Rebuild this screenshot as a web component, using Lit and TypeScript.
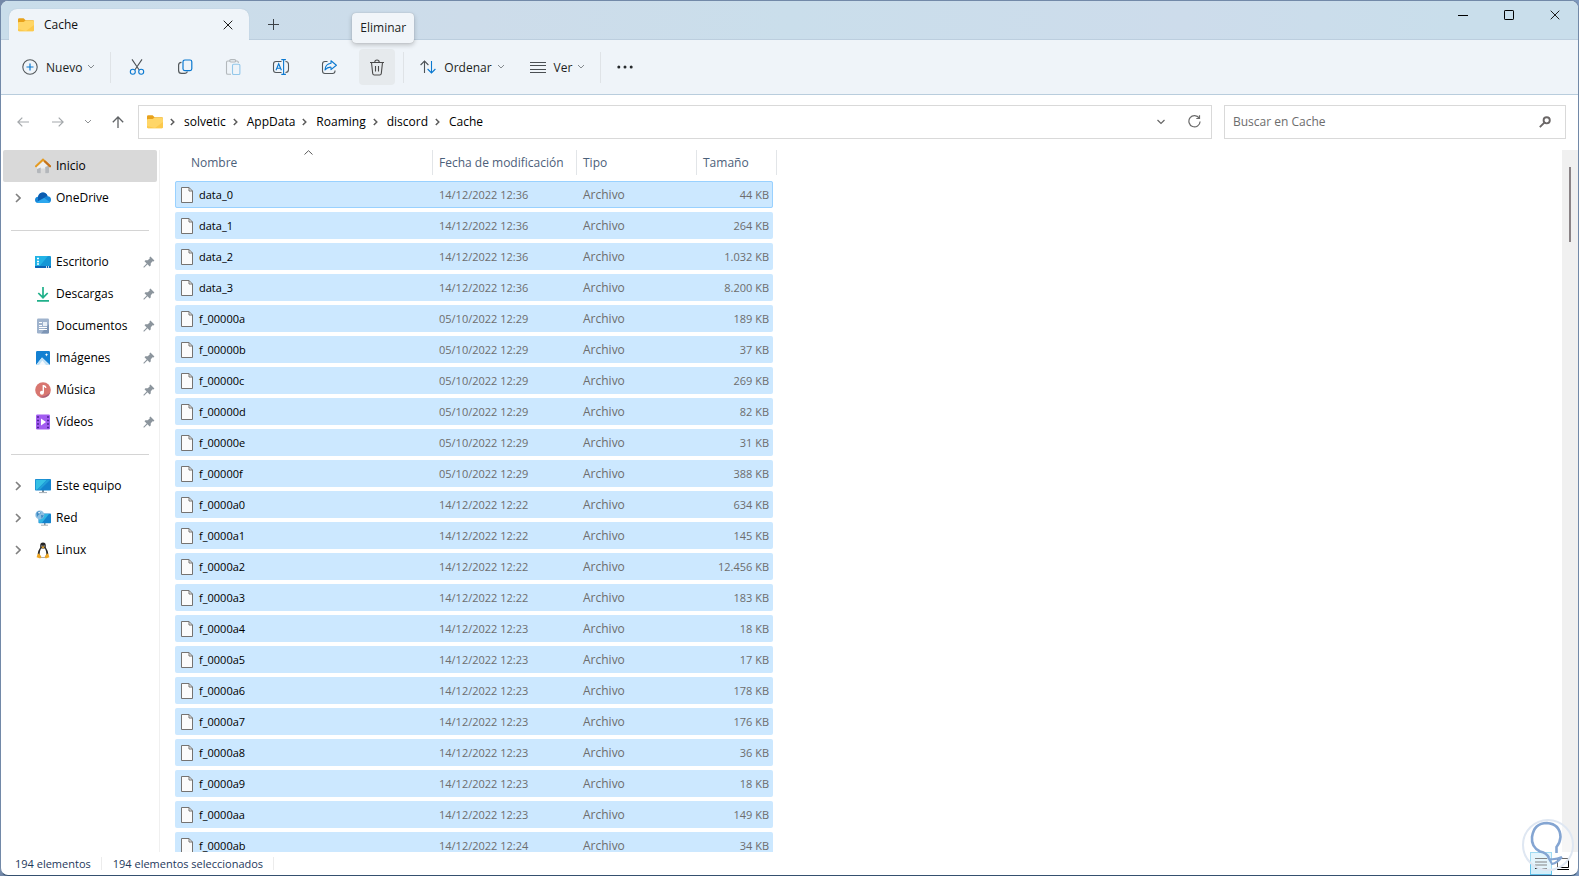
import { LitElement, html, css, svg, nothing } from "lit";
import { customElement } from "lit/decorators.js";

const folder = svg`<svg width="16" height="14" viewBox="0 0 16 14"><path d="M0 1.5Q0 .3 1.2 .3H5.6L7.6 2.3H14.8Q16 2.3 16 3.5V6H0Z" fill="#e8a21c"/><path d="M0 5Q0 4 1 4H5.6L7.6 2.6H14.8Q16 2.6 16 3.8V12Q16 13.2 14.8 13.2H1.2Q0 13.2 0 12Z" fill="#ffd667"/><path d="M0 11V12Q0 13.2 1.2 13.2H14.8Q16 13.2 16 12V7L8 13Z" fill="#fcc94c"/></svg>`;
const chevronDown = svg`<svg width="8" height="6" viewBox="0 0 8 6" fill="none" stroke="currentColor"><path d="M1 1L4 4L7 1"/></svg>`;
const chevronRight = svg`<svg width="6" height="10" viewBox="0 0 6 10" fill="none" stroke="currentColor" stroke-width="1.6"><path d="M1 1L5 5L1 9"/></svg>`;
const crumbChevron = svg`<svg width="5" height="8" viewBox="0 0 5 8" fill="none" stroke="#5c5c5c" stroke-width="1.5"><path d="M.8 1L3.8 4L.8 7"/></svg>`;
const closeX = svg`<svg width="10" height="10" viewBox="0 0 10 10" fill="none" stroke="#1c1c1c"><path d="M.7 .7L9.3 9.3M9.3 .7L.7 9.3"/></svg>`;
const plus = svg`<svg width="11" height="11" viewBox="0 0 11 11" fill="none" stroke="#3c4146"><path d="M5.5 0V11M0 5.5H11"/></svg>`;
const file = svg`<svg width="12" height="16" viewBox="0 0 12 16"><path d="M.5 .5H8L11.5 4V15.5H.5Z" fill="#fbfbfb" stroke="#757371"/><path d="M8 .5V4H11.5" fill="none" stroke="#757371"/></svg>`;
const pin = svg`<svg width="12" height="12" viewBox="0 0 12 12"><path d="M7.400 .6L11.400 4.600L10.500 5.500L9.600 5.300L7.800 7.300L7.700 9.600L6.700 10.500L4.500 8.300L1 11.700L.3 11L3.700 7.500L1.500 5.300L2.400 4.300L4.700 4.200L6.700 2.400L6.500 1.500Z" fill="#8c959d"/></svg>`;

const icons: Record<string, unknown> = {
  create: svg`<svg width="16" height="16" viewBox="0 0 16 16" fill="none"><circle cx="8" cy="8" r="7.2" stroke="#53585c" stroke-width="1.1"/><path d="M8 4.5V11.5M4.5 8H11.5" stroke="#0a78d0" stroke-width="1.2"/></svg>`,
  cut: svg`<svg width="16" height="16" viewBox="0 0 16 16" fill="none" stroke-width="1.1"><path d="M3 .4L10.200 11M13 .4L5.800 11" stroke="#4e5357"/><circle cx="3.800" cy="12.800" r="2.500" stroke="#0a78d0"/><circle cx="12.200" cy="12.800" r="2.500" stroke="#0a78d0"/></svg>`,
  copy: svg`<svg width="16" height="16" viewBox="0 0 16 16" fill="none" stroke-width="1.2"><path d="M4.500 3.300Q1.600 3.500 1.600 6V11.500Q1.600 14.400 4.500 14.400H7.500Q10 14.400 10.300 12.500" stroke="#53585c"/><rect x="6" y="1" width="8.800" height="10.600" rx="1.800" stroke="#0a78d0"/></svg>`,
  paste: svg`<svg width="16" height="16" viewBox="0 0 16 16" fill="none" stroke-width="1.1"><path d="M5 2H2.800Q1.500 2 1.500 3.300V14Q1.500 15.300 2.800 15.300H6M11 2H12Q13.300 2 13.300 3.300V4" stroke="#b3b8bc"/><rect x="4.700" y=".6" width="6" height="2.400" rx="1.200" stroke="#b3b8bc"/><rect x="7.500" y="5.300" width="7.400" height="10.200" rx="1.200" stroke="#93c7ea"/></svg>`,
  rename: svg`<svg width="18" height="16" viewBox="0 0 18 16" fill="none" stroke-width="1.100"><path d="M9.500 2.500H4Q1.500 2.500 1.500 5V11Q1.500 13.500 4 13.500H9.500M13.500 2.500Q16.500 2.500 16.500 5.500V10.500Q16.500 13.500 13.500 13.500" stroke="#53585c"/><path d="M4 11.300L6.700 4.800L9.400 11.300M5 9.300H8.400M11.600 .6V15.400M9.300 .6H13.900M9.300 15.400H13.900" stroke="#0a78d0"/></svg>`,
  share: svg`<svg width="16" height="16" viewBox="0 0 16 16" fill="none" stroke-width="1.100" stroke-linejoin="round"><path d="M6.500 2.500H4Q1.500 2.500 1.500 5V12Q1.500 14.500 4 14.500H11.500Q14 14.500 14 12V11.500" stroke="#53585c"/><path d="M10 1.800L15.400 6.200L10 10.600V8.200Q6.500 7.900 4 11Q4.300 5 10 4.300Z" stroke="#0a78d0"/></svg>`,
  trash: svg`<svg width="16" height="17" viewBox="0 0 16 17" fill="none" stroke="#4a4a4a" stroke-width="1.100"><path d="M1 3.500H15M5.800 3.300Q5.800 1 8 1Q10.200 1 10.200 3.300M2.500 3.500L3.700 14.500Q3.900 16 5.300 16H10.700Q12.100 16 12.300 14.500L13.500 3.500M6.500 7V12.500M9.500 7V12.500"/></svg>`,
  sort: svg`<svg width="16" height="14" viewBox="0 0 16 14" fill="none" stroke-width="1.100"><path d="M4.500 13V1.200M.6 5L4.500 1.100L8.400 5" stroke="#4e5357"/><path d="M11.500 1V12.800M7.600 9L11.500 12.900L15.400 9" stroke="#0a78d0"/></svg>`,
  view: svg`<svg width="16" height="11" viewBox="0 0 16 11" stroke="#4a4f53"><path d="M0 .5H16M0 3.500H16M0 7.500H16M0 10.500H16"/></svg>`,
  more: svg`<svg width="16" height="4" viewBox="0 0 16 4" fill="#26292c"><circle cx="1.800" cy="2" r="1.500"/><circle cx="8" cy="2" r="1.500"/><circle cx="14.200" cy="2" r="1.500"/></svg>`,
  home: svg`<svg width="16" height="16" viewBox="0 0 16 16"><path d="M2 8L8 2.500L14 8V14.300Q14 15.300 13 15.300H10.200V10.500H5.800V15.300H3Q2 15.300 2 14.300Z" fill="#eceef0"/><path d="M10.200 9L14 7.500V14.300Q14 15.300 13 15.300H10.200ZM2 11L5.800 9.500V15.300H3Q2 15.300 2 14.300Z" fill="#b4b7bb"/><path d="M1 8.200L8 1.700L15 8.200" fill="none" stroke="#e59b22" stroke-width="2" stroke-linecap="round"/><path d="M10 3.500L15 8.200" fill="none" stroke="#c4711d" stroke-width="2" stroke-linecap="round"/></svg>`,
  cloud: svg`<svg width="16" height="12" viewBox="0 0 16 12"><path d="M3.500 11Q0 11 0 8Q0 5.200 3 4.800Q4.300 .6 8 .6Q11.400 .6 12.600 4.200Q16 4.600 16 7.700Q16 11 12.500 11Z" fill="#1586d8"/><path d="M3 4.800Q4.300 .6 8 .6Q11.400 .6 12.600 4.200Q10.500 4 9.300 5.700L3 9Z" fill="#0b5cb0"/><path d="M1.500 10.200L9.300 6L15 10.200Q14 11 12.500 11H3.500Q2.300 11 1.500 10.200Z" fill="#2da7ee"/></svg>`,
  desktop: svg`<svg width="16" height="12" viewBox="0 0 16 12"><rect width="16" height="12" rx="1" fill="#1496d6"/><path d="M0 0H13L3 12H0Z" fill="#22b3e6"/><path d="M0 10H16V11Q16 12 15 12H1Q0 12 0 11Z" fill="#0b63b5"/><path d="M2 2.500H4M2 5.500H4M2 8H4M11 11H12M13 11H14" stroke="#fff" stroke-width="1.300"/></svg>`,
  download: svg`<svg width="16" height="16" viewBox="0 0 16 16" fill="none" stroke="#20b08a" stroke-width="1.700"><path d="M8 1V11.500M3.300 7L8 11.700L12.700 7M2 14.900H14"/></svg>`,
  document: svg`<svg width="16" height="16" viewBox="0 0 16 16"><rect x="2" y=".5" width="12" height="15" rx="1.200" fill="#9fb3cd"/><path d="M14 6V14.300Q14 15.500 12.800 15.500H6Z" fill="#7d95b5"/><path d="M4 4.500H7M4 7.500H7M4 9.500H12M4 11.500H12" stroke="#fff"/><rect x="8" y="4" width="4" height="4" fill="#e8eff7"/></svg>`,
  picture: svg`<svg width="16" height="16" viewBox="0 0 16 16"><rect x="1" y="1" width="14" height="14" rx="1.200" fill="#1380d2"/><path d="M1.500 14.500L7 7.500L14.500 14.600Q14 15 13.500 15H2.300Z" fill="#f4fafe"/><path d="M7 7.500L1 15H4L7.400 10.500L11 15H14.500Z" fill="#c2e2f7"/><path d="M11.500 3L12 4.300L13.300 4.800L12 5.300L11.500 6.600L11 5.300L9.700 4.800L11 4.300Z" fill="#fff"/></svg>`,
  music: svg`<svg width="16" height="16" viewBox="0 0 16 16"><circle cx="8" cy="8" r="7.800" fill="#d87670"/><path d="M15.200 10.500Q13.500 15.500 8 15.800Q6 15.800 4.500 15Q11 14.500 15.200 10.500Z" fill="#a9607a"/><path d="M8.300 3V10.500M8.300 3.700Q10.500 3.800 10.800 6" stroke="#fff" stroke-width="1.400" fill="none"/><circle cx="6.900" cy="10.800" r="2" fill="#fff"/></svg>`,
  video: svg`<svg width="16" height="16" viewBox="0 0 16 16"><rect x="1" y=".5" width="14" height="15" rx="1.200" fill="#a25cf0"/><path d="M2 3H4M2 6.500H4M2 10H4M2 13.500H4M12 3H14M12 6.500H14M12 10H14M12 13.500H14" stroke="#4c2294" stroke-width="1.700"/><path d="M6 4.500L11 8L6 11.500Z" fill="#fff"/></svg>`,
  computer: svg`<svg width="16" height="16" viewBox="0 0 16 16"><path d="M7 12H9V14.300H7Z" fill="#7f8b94"/><path d="M4 14.600H12" stroke="#a2adb5"/><rect y="1" width="16" height="11.500" rx=".8" fill="#1483ce"/><path d="M.7 1.700H12L2 11.800H.7Z" fill="#35c0e4"/><path d="M12 1.700H15.300L5 11.800H2Z" fill="#22a0d9"/></svg>`,
  network: svg`<svg width="16" height="16" viewBox="0 0 16 16"><path d="M9 13H10.500V15H9Z" fill="#7f8b94"/><path d="M6 15.200H13" stroke="#a2adb5"/><rect x="3.500" y="3.500" width="12.500" height="9.800" rx=".8" fill="#1483ce"/><path d="M4 8V12.800H7L14 4H8Z" fill="#31b5e2"/><circle cx="4.800" cy="4.900" r="4.500" fill="#8cbfe2"/><path d="M1.500 3Q3 .8 5 1L6 3L3.500 5L2 7ZM6 5L9 5.500L6.500 8.800Z" fill="#3e8ac4"/><path d="M3 2L6 1.500L4 4Z" fill="#e3f1fa"/></svg>`,
  linux: svg`<svg width="16" height="17" viewBox="0 0 16 17"><path d="M5.200 3.500Q5.200 .5 8 .5Q10.800 .5 10.800 3.500V5.500Q13.200 9 13.300 12L11.500 15.500H4.500L2.700 12Q2.800 9 5.200 5.500Z" fill="#262626"/><path d="M6 6.500H10Q11.500 9.500 11.400 12L10.200 15.300H5.800L4.600 12Q4.500 9.500 6 6.500Z" fill="#fff"/><path d="M6.400 3.400H7.400V4.400H6.400ZM8.600 3.400H9.600V4.400H8.600Z" fill="#fff"/><path d="M6.300 5L8 4.300L9.700 5L8 6.500ZM2.600 12L4 11.400L6.500 15L5.200 16.500L1.600 15.200ZM13.400 12L12 11.400L9.600 15L10.800 16.500L14.400 15.200Z" fill="#efa724"/></svg>`,
};

interface Place { label: string; icon: string; expand?: boolean; pinned?: boolean; current?: boolean }

const places: Place[][] = [
  [
    { label: "Inicio", icon: "home", current: true },
    { label: "OneDrive", icon: "cloud", expand: true },
  ],
  [
    { label: "Escritorio", icon: "desktop", pinned: true },
    { label: "Descargas", icon: "download", pinned: true },
    { label: "Documentos", icon: "document", pinned: true },
    { label: "Imágenes", icon: "picture", pinned: true },
    { label: "Música", icon: "music", pinned: true },
    { label: "Vídeos", icon: "video", pinned: true },
  ],
  [
    { label: "Este equipo", icon: "computer", expand: true },
    { label: "Red", icon: "network", expand: true },
    { label: "Linux", icon: "linux", expand: true },
  ],
];

const files: [string, string, string][] = [
  ["data_0", "14/12/2022 12:36", "44 KB"],
  ["data_1", "14/12/2022 12:36", "264 KB"],
  ["data_2", "14/12/2022 12:36", "1.032 KB"],
  ["data_3", "14/12/2022 12:36", "8.200 KB"],
  ["f_00000a", "05/10/2022 12:29", "189 KB"],
  ["f_00000b", "05/10/2022 12:29", "37 KB"],
  ["f_00000c", "05/10/2022 12:29", "269 KB"],
  ["f_00000d", "05/10/2022 12:29", "82 KB"],
  ["f_00000e", "05/10/2022 12:29", "31 KB"],
  ["f_00000f", "05/10/2022 12:29", "388 KB"],
  ["f_0000a0", "14/12/2022 12:22", "634 KB"],
  ["f_0000a1", "14/12/2022 12:22", "145 KB"],
  ["f_0000a2", "14/12/2022 12:22", "12.456 KB"],
  ["f_0000a3", "14/12/2022 12:22", "183 KB"],
  ["f_0000a4", "14/12/2022 12:23", "18 KB"],
  ["f_0000a5", "14/12/2022 12:23", "17 KB"],
  ["f_0000a6", "14/12/2022 12:23", "178 KB"],
  ["f_0000a7", "14/12/2022 12:23", "176 KB"],
  ["f_0000a8", "14/12/2022 12:23", "36 KB"],
  ["f_0000a9", "14/12/2022 12:23", "18 KB"],
  ["f_0000aa", "14/12/2022 12:23", "149 KB"],
  ["f_0000ab", "14/12/2022 12:24", "34 KB"],
];

const reset = css`
  * { box-sizing: border-box; }
  svg { display: block; flex: none; }
  button { font: inherit; color: inherit; background: none; border: 0; padding: 0; margin: 0; display: flex; align-items: center; justify-content: center; }
  a { color: inherit; text-decoration: none; }
  ul, ol { list-style: none; margin: 0; padding: 0; }
`;

@customElement("title-bar")
class TitleBar extends LitElement {
  static styles = [reset, css`
    :host { display: flex; align-items: flex-end; height: 39px; padding-left: 8px; background: linear-gradient(90deg, #c9ddea, #cddcea 30%, #cadeeb 50%, #cddceb 75%, #c9deeb 92%); border-bottom: 1px solid #bccede; }
    .tab { width: 240px; height: 31px; margin-bottom: -1px; padding: 0 16px 0 9px; display: flex; align-items: center; background: #eff4f9; border-radius: 8px 8px 0 0; box-shadow: 0 0 1px #9fb6c8; clip-path: inset(-2px -2px 0 -2px); }
    .name { margin-left: 10px; flex: 1; }
    .add { width: 30px; height: 30px; margin-left: 9px; }
    .controls { margin-left: auto; align-self: flex-start; display: flex; }
    .controls button { width: 46px; height: 28px; }
  `];
  render() {
    return html`
      <div class="tab">${folder}<span class="name">Cache</span><button aria-label="Cerrar pestaña">${closeX}</button></div>
      <button class="add" aria-label="Nueva pestaña">${plus}</button>
      <div class="controls">
        <button aria-label="Minimizar"><svg width="10" height="10" viewBox="0 0 10 10"><path d="M0 5.500H10" stroke="#000"/></svg></button>
        <button aria-label="Maximizar"><svg width="10" height="10" viewBox="0 0 10 10"><rect x=".5" y=".5" width="9" height="9" rx=".6" fill="none" stroke="#000"/></svg></button>
        <button aria-label="Cerrar">${closeX}</button>
      </div>`;
  }
}

@customElement("command-bar")
class CommandBar extends LitElement {
  static styles = [reset, css`
    :host { display: flex; align-items: center; height: 55px; padding-left: 11px; background: #eff4f9; border-bottom: 1px solid #b9cddd; }
    button { height: 36px; border-radius: 4px; }
    .menu { padding: 0 15px 0 10px; color: #1c1f22; }
    .menu span { margin: 2px 5px 0 8px; }
    .menu span + svg { color: #858a8e; }
    .rule + .menu { margin-left: 6px; }
    .tools { display: flex; gap: 12px; padding: 0 8px; }
    .tool { width: 36px; position: relative; }
    .hot { background: #e6eaed; }
    .rule { width: 1px; height: 31px; background: #dfe3e7; }
    .tip { position: absolute; left: -7px; bottom: 42px; height: 30px; padding: 0 8px; line-height: 29px; background: #f1f5f9; border-radius: 4px; color: #1c1f22; box-shadow: 0 2px 5px #00000038, 0 0 1px #00000040; z-index: 2; }
  `];
  private tool(icon: string, label: string, hot = false) {
    return html`<button class="tool ${hot ? "hot" : ""}" aria-label=${label}>${icons[icon]}${hot ? html`<span class="tip" role="tooltip">${label}</span>` : nothing}</button>`;
  }
  render() {
    return html`
      <button class="menu">${icons.create}<span>Nuevo</span>${chevronDown}</button>
      <span class="rule"></span>
      <div class="tools">
        ${this.tool("cut", "Cortar")}${this.tool("copy", "Copiar")}${this.tool("paste", "Pegar")}
        ${this.tool("rename", "Cambiar nombre")}${this.tool("share", "Compartir")}${this.tool("trash", "Eliminar", true)}
      </div>
      <span class="rule"></span>
      <button class="menu">${icons.sort}<span>Ordenar</span>${chevronDown}</button>
      <button class="menu">${icons.view}<span>Ver</span>${chevronDown}</button>
      <span class="rule"></span>
      <button class="menu" aria-label="Ver más">${icons.more}</button>`;
  }
}

@customElement("address-row")
class AddressRow extends LitElement {
  static styles = [reset, css`
    :host { display: flex; align-items: center; height: 55px; padding: 0 12px 2px 4px; }
    .nav { display: flex; color: #a4a8ab; width: 133px; }
    .nav button { height: 34px; width: 35px; }
    .nav .recent { width: 25px; color: #8e9194; }
    .nav .up { color: #5f6265; }
    .box { height: 34px; border: 1px solid #d9d9d9; display: flex; align-items: center; background: #fff; }
    .path { flex: 1; padding: 0 8px; }
    .crumbs { display: flex; margin-left: 7px; flex: 1; color: #000; }
    .crumbs li { display: flex; align-items: center; }
    .crumbs a { padding: 0 7px 0 9px; }
    .path button { width: 33px; color: #666; }
    .path button:last-child { width: 18px; margin-left: 8px; }
    .search { margin-left: 12px; width: 342px; padding: 0 14px 0 8px; }
    input { flex: 1; min-width: 0; border: 0; outline: 0; padding: 0; font: inherit; background: none; }
    input::placeholder { color: #6d6d6d; opacity: 1; }
  `];
  render() {
    return html`
      <nav class="nav" aria-label="Historial">
        <button aria-label="Atrás"><svg width="12" height="10" viewBox="0 0 12 10" fill="none" stroke="currentColor" stroke-width="1.200"><path d="M12 5H1M5.300 .6L.9 5L5.300 9.400"/></svg></button>
        <button aria-label="Adelante"><svg width="12" height="10" viewBox="0 0 12 10" fill="none" stroke="currentColor" stroke-width="1.200"><path d="M0 5H11M6.700 .6L11.100 5L6.700 9.400"/></svg></button>
        <button class="recent" aria-label="Recientes">${chevronDown}</button>
        <button class="up" aria-label="Subir"><svg width="12" height="12" viewBox="0 0 12 12" fill="none" stroke="currentColor" stroke-width="1.300"><path d="M6 12V1M.8 6.200L6 1L11.200 6.200"/></svg></button>
      </nav>
      <div class="box path">
        ${folder}
        <ol class="crumbs">${["solvetic", "AppData", "Roaming", "discord", "Cache"].map((c) => html`<li>${crumbChevron}<a href="#">${c}</a></li>`)}</ol>
        <button aria-label="Ubicaciones anteriores"><svg width="8" height="6" viewBox="0 0 8 6" fill="none" stroke="currentColor" stroke-width="1.200"><path d="M.5 1L4 4.500L7.500 1"/></svg></button>
        <button aria-label="Actualizar"><svg width="13" height="13" viewBox="0 0 13 13" fill="none" stroke="#6a6a6a" stroke-width="1.200"><path d="M11.200 3.200A5.600 5.600 0 1 0 12.100 6.500M11.500 .3V3.500H8.300"/></svg></button>
      </div>
      <div class="box search">
        <input type="search" aria-label="Buscar en Cache" placeholder="Buscar en Cache" />
        <svg width="12" height="12" viewBox="0 0 12 12" fill="none" stroke="#6b6767" stroke-width="1.900"><circle cx="7.700" cy="4.300" r="3.100"/><path d="M5.300 6.700L.8 11.200"/></svg>
      </div>`;
  }
}

@customElement("side-nav")
class SideNav extends LitElement {
  static styles = [reset, css`
    :host { width: 159px; flex: none; border-right: 1px solid #f0f0f0; padding-left: 2px; }
    a { display: grid; grid-template-columns: 20px 16px 1fr 12px; column-gap: 5px; align-items: center; height: 32px; width: 154px; padding: 0 2px 0 7px; border-radius: 2px; color: #000; }
    .current { background: #d9d9d9; }
    .twist { padding-left: 5px; color: #808080; }
    hr { border: 0; height: 1px; background: #d4d4d4; margin: 16px 10px 15px 8px; }
  `];
  render() {
    return places.map((group, i) => html`
      ${i ? html`<hr />` : nothing}
      <ul>${group.map((p) => html`<li><a href="#" class=${p.current ? "current" : ""}>
        <span class="twist">${p.expand ? chevronRight : nothing}</span>${icons[p.icon]}<span>${p.label}</span>${p.pinned ? pin : nothing}
      </a></li>`)}</ul>`);
  }
}

@customElement("file-list")
class FileTable extends LitElement {
  static styles = [reset, css`
    :host { flex: 1; min-width: 0; overflow: hidden; padding-left: 15px; }
    table, thead, tbody { display: block; }
    tr { display: grid; grid-template-columns: 258px 144px 120px 76px 4px; }
    thead tr { height: 25px; margin-bottom: 6px; }
    th { padding: 0 0 0 6px; font-weight: 400; text-align: left; line-height: 25px; color: #4c607a; border-right: 1px solid #e2e5e8; position: relative; white-space: nowrap; }
    th:first-child { padding-left: 16px; }
    th:nth-child(4) { border-right: 0; }
    .edge { padding: 0; }
    .arrow { position: absolute; left: 129px; top: 0; }
    tbody tr { height: 27px; margin-bottom: 4px; }
    td { padding: 0 0 0 6px; line-height: 27px; color: #6d6d6d; background: #cce8ff; white-space: nowrap; }
    .num { font-size: 11px; }
    td:first-child { display: flex; align-items: center; gap: 6px; color: #000; border-radius: 2px 0 0 2px; }
    td:last-child { padding: 0 4px 0 0; text-align: right; border-radius: 0 2px 2px 0; }
    .focused { width: 598px; outline: 1px solid #99d1ff; outline-offset: -1px; border-radius: 2px; }
  `];
  render() {
    return html`<table>
      <thead><tr>
        <th aria-sort="ascending">Nombre<svg class="arrow" width="9" height="5" viewBox="0 0 9 5" fill="none" stroke="#5c5c5c"><path d="M.5 4.500L4.500 .7L8.500 4.500"/></svg></th>
        <th>Fecha de modificación</th><th>Tipo</th><th>Tamaño</th><th class="edge"></th>
      </tr></thead>
      <tbody>${files.map(([name, date, size], i) => html`<tr class=${i ? "" : "focused"}><td class="num">${file}${name}</td><td class="num">${date}</td><td>Archivo</td><td class="num">${size}</td></tr>`)}</tbody>
    </table>`;
  }
}

@customElement("status-bar")
class StatusBar extends LitElement {
  static styles = [reset, css`
    :host { display: flex; align-items: center; height: 23px; padding-left: 14px; color: #1e395b; position: relative; font-size: 11px; }
    .item { padding-right: 10px; margin-right: 11px; border-right: 1px solid #ececec; line-height: 13px; white-space: nowrap; }
    .views { margin-left: auto; display: flex; height: 23px; padding-right: 4px; }
    .views button { width: 22px; height: 23px; }
    .views .on { background: #d3eefa; border: 1px solid #62c3ec; }
    .mark { position: absolute; right: 1px; bottom: 1px; pointer-events: none; }
  `];
  render() {
    return html`
      <span class="item">194 elementos</span><span class="item">194 elementos seleccionados</span>
      <svg class="mark" width="56" height="56" viewBox="0 0 56 56" fill="none"><circle cx="27" cy="27" r="25" fill="#ffffff66" stroke="#dfe7f2" stroke-width="2"/><path d="M28 40Q26 35 19 33.500Q10 29 11 19Q13 5 26 5Q39 6 39.500 19Q39 25 35.500 29V35" stroke="#84a5d2" stroke-width="2.600"/><path d="M41 39Q35 42 28 41L31 46Q36 45 41 39" stroke="#84a5d2" stroke-width="2"/></svg>
      <div class="views">
        <button class="on" aria-label="Detalles"><svg width="12" height="11" viewBox="0 0 12 11" stroke="#333"><path d="M0 .5H12M0 4H12M0 7H12M0 10.500H12"/></svg></button>
        <button aria-label="Iconos grandes"><svg width="12" height="12" viewBox="0 0 12 12" fill="none" stroke="#000"><path d="M.5 .5H11.500V9.500H.5ZM0 11.500H12"/></svg></button>
      </div>`;
  }
}

@customElement("app-root")
class AppRoot extends LitElement {
  static styles = [reset, css`
    :host { display: block; height: 100vh; background: linear-gradient(90deg, #7488a8, #29476b 15%, #29476b 90%, #7f9ac0); font: 12px/16px "Open Sans", "Noto Sans", sans-serif; color: #111; }
    .window { height: 100%; display: flex; flex-direction: column; border: 1px solid #7289a8; border-bottom-color: #35506f; border-radius: 8px; background: #fff; overflow: hidden; }
    .body { flex: 1; min-height: 0; display: flex; }
    .scroll { width: 16px; flex: none; background: #f0f0f0; padding: 17px 7px; }
    .thumb { width: 2px; height: 75px; background: #8a8386; }
  `];
  render() {
    return html`<div class="window">
      <title-bar></title-bar>
      <command-bar></command-bar>
      <address-row></address-row>
      <main class="body"><side-nav></side-nav><file-list></file-list><div class="scroll"><div class="thumb"></div></div></main>
      <status-bar></status-bar>
    </div>`;
  }
}
